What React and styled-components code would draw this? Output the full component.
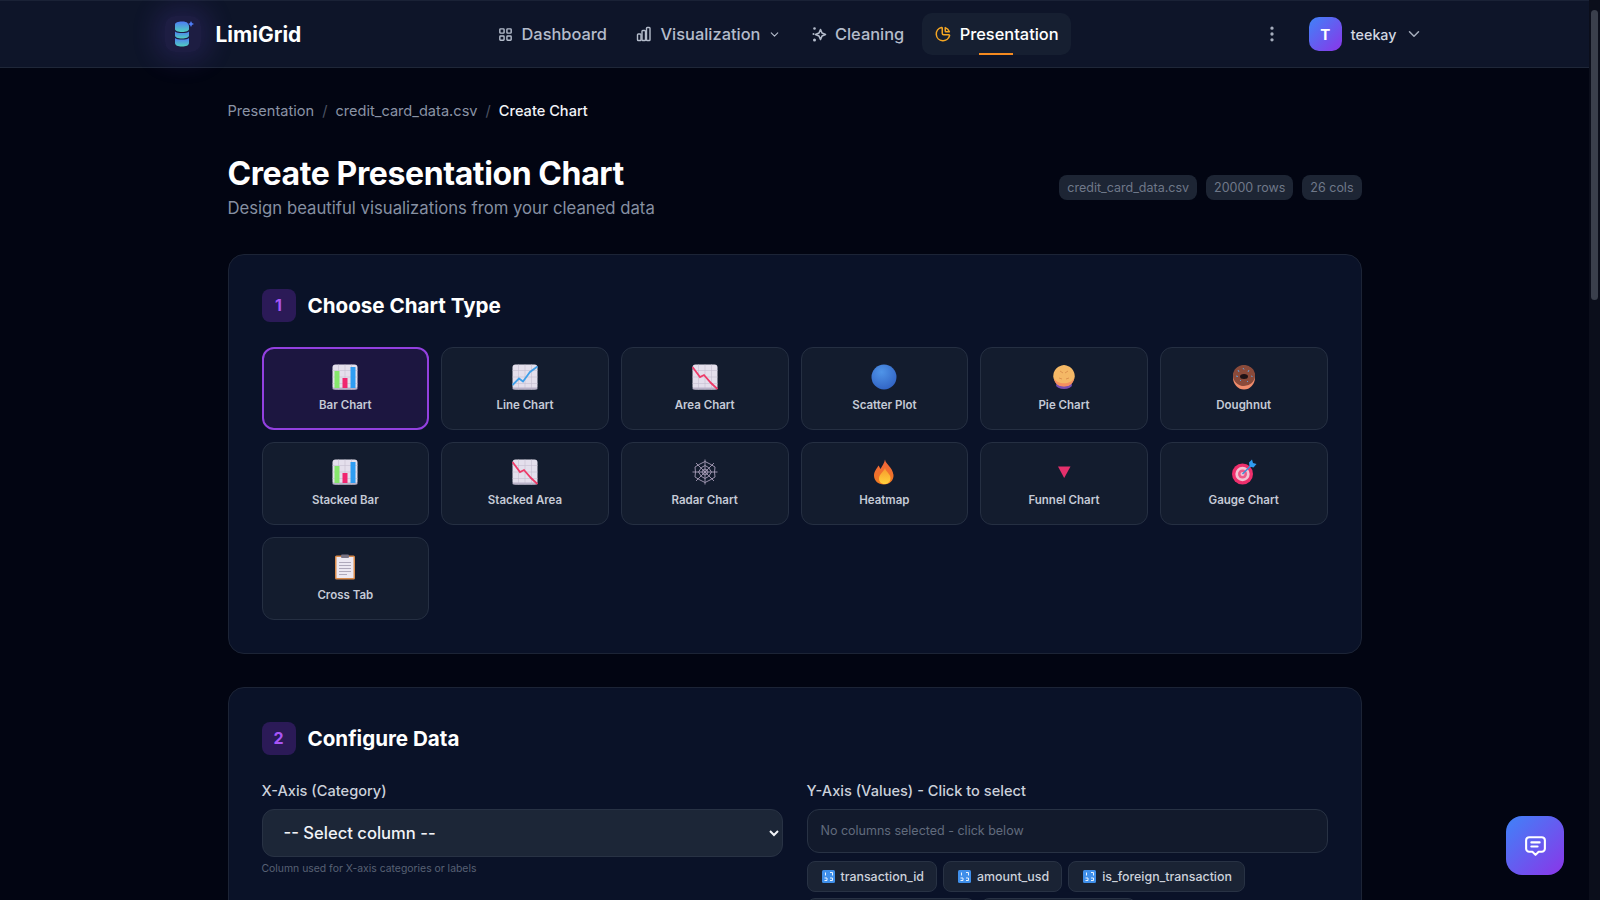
import React from 'react'
import styled, { createGlobalStyle } from 'styled-components'
import { TbLayoutGrid, TbChartPie, TbDotsVertical, TbChevronDown, TbMessage2 } from 'react-icons/tb'

const GlobalStyle = createGlobalStyle`
  html, body { margin: 0; padding: 0; background: #020512; }
  body { font-family: Inter, "Noto Sans", sans-serif; color: #fff; }
  * { box-sizing: border-box; }
`

// little emoji-like drawings
const GridTile = ({ children }) => (
  <svg width="26" height="26" viewBox="0 0 26 26">
    <rect x="0.5" y="0.5" width="25" height="25" rx="3" fill="#e4dfec" />
    <path d="M0.5 6.5H25.5M0.5 13H25.5M0.5 19.5H25.5M6.5 0.5V25.5M13 0.5V25.5M19.5 0.5V25.5" stroke="#c6c0d2" strokeWidth="0.6" />
    <rect x="0.5" y="23.5" width="25" height="2" rx="1" fill="#b9b2c8" />
    {children}
  </svg>
)

const BarEmoji = () => (
  <GridTile>
    <rect x="2.5" y="7" width="5" height="17" fill="#86e66c" />
    <rect x="10.5" y="14" width="5" height="10" fill="#f0266f" />
    <rect x="18.5" y="3" width="5" height="21" fill="#2f9df2" />
  </GridTile>
)

const LineEmoji = () => (
  <GridTile>
    <path d="M0.5 21L7 14.5L11 17.5L18 8L25.5 2.5" fill="none" stroke="#3f9fe8" strokeWidth="1.8" />
  </GridTile>
)

const AreaEmoji = () => (
  <GridTile>
    <path d="M0.5 3L8 13L12 11L19 19L25.5 25" fill="none" stroke="#ee3a68" strokeWidth="1.8" />
  </GridTile>
)

const BallEmoji = () => (
  <svg width="26" height="26" viewBox="0 0 26 26">
    <defs>
      <radialGradient id="ball" cx="0.4" cy="0.3" r="0.8">
        <stop offset="0" stopColor="#4f94e8" />
        <stop offset="1" stopColor="#2f5fc0" />
      </radialGradient>
    </defs>
    <circle cx="13" cy="13" r="12.5" fill="url(#ball)" />
  </svg>
)

const PieEmoji = () => (
  <svg width="26" height="26" viewBox="0 0 26 26">
    <ellipse cx="13" cy="21" rx="8" ry="4" fill="#7a4fb0" />
    <path d="M13 1C15 1 16 2 18 2.5C20.500 3.500 23 7 23.500 10C24.500 13 23 17 20 20C17 23 9 23 6 20C3 17 1.500 13 2.500 10C3 7 5.500 3.500 8 2.500C10 2 11 1 13 1Z" fill="#f4b866" />
    <path d="M3 14C6 21 20 21 23 14C23 18 20 22.500 13 22.500C6 22.500 3 18 3 14Z" fill="#f58f5e" />
    <path d="M9 7L12 9M17 7L14 9M8 14L11 15M18 14L15 15" stroke="#d98d4c" strokeWidth="0.9" />
  </svg>
)

const DonutEmoji = () => (
  <svg width="26" height="26" viewBox="0 0 26 26">
    <ellipse cx="13" cy="13.500" rx="11" ry="12" fill="#f08c6c" />
    <ellipse cx="13" cy="11.500" rx="11" ry="10.500" fill="#8a4a3a" />
    <ellipse cx="13" cy="12.500" rx="4" ry="2.500" fill="#1d1216" />
    <path d="M7 6l1 2M12 4l1 1.500M18 6l-1 2M5 12l2 .5M20 12l1.500 .5M9 17l1-1M16 18l1-1" stroke="#5ea6e8" strokeWidth="0.9" />
  </svg>
)

const WebEmoji = () => (
  <svg width="26" height="26" viewBox="0 0 26 26" fill="none" stroke="#a79db8" strokeWidth="0.9">
    <path d="M13 0.500V25.500M0.500 13H25.500M4 4L22 22M22 4L4 22" />
    <path d="M13 2.500L18 5L23 8L22.500 13L23 18L18 21L13 23.500L8 21L3 18L3.500 13L3 8L8 5Z" />
    <path d="M13 6.500L16.500 8.500L19.500 13L16.500 17.500L13 19.500L9.500 17.500L6.500 13L9.500 8.500Z" />
    <path d="M13 10L15 11L16 13L15 15L13 16L11 15L10 13L11 11Z" />
  </svg>
)

const FlameEmoji = () => (
  <svg width="26" height="26" viewBox="0 0 26 26">
    <defs>
      <linearGradient id="flame" x1="0" y1="0" x2="0" y2="1">
        <stop offset="0" stopColor="#f0643c" />
        <stop offset="1" stopColor="#f07a20" />
      </linearGradient>
      <linearGradient id="flameIn" x1="0" y1="0" x2="0" y2="1">
        <stop offset="0" stopColor="#f8982c" />
        <stop offset="1" stopColor="#ffd23c" />
      </linearGradient>
    </defs>
    <path d="M14 0.500C14.500 5 21.500 8 22.500 16C22.800 21.500 18.500 25.500 13 25.500C7 25.500 3 21.500 3 16.500C3 12 6 9.500 7.500 6.500C8.500 8 9 9 9.500 10C11 7 13.500 4 14 0.500Z" fill="url(#flame)" />
    <path d="M14 9C15 13 19.500 15 19.500 19C19.500 23 16.500 25 13.500 25C10 25 8 22.500 8 19.500C8 15.500 12.500 13 14 9Z" fill="url(#flameIn)" />
  </svg>
)

const FunnelEmoji = () => (
  <svg width="26" height="26" viewBox="0 0 26 26">
    <path d="M7 7.500H19.500L13.200 19Z" fill="#e5306c" />
  </svg>
)

const TargetEmoji = () => (
  <svg width="26" height="26" viewBox="0 0 26 26">
    <circle cx="11.500" cy="15" r="10.500" fill="#ee2f6c" />
    <circle cx="11.500" cy="15" r="7.200" fill="#f2c2d2" />
    <circle cx="11.500" cy="15" r="4.500" fill="#ee5a88" />
    <circle cx="11.500" cy="15" r="2" fill="#f2c2d2" />
    <path d="M11.500 15L21 5.500" stroke="#3f8fd8" strokeWidth="1.600" />
    <path d="M18 3.500L21 0.500L22 4L25.500 5L22.500 8.500L18.500 7.500Z" fill="#2f9df2" />
  </svg>
)

const ClipboardEmoji = () => (
  <svg width="26" height="26" viewBox="0 0 26 26">
    <rect x="3" y="1.500" width="20" height="24" rx="1.500" fill="#d98a4a" />
    <rect x="4.500" y="3" width="17" height="21" fill="#ece8f2" />
    <rect x="9" y="0.500" width="8" height="3.500" rx="1" fill="#7a7484" />
    <path d="M7 8.500H19M7 11.500H19M7 14.500H19M7 17.500H19M7 20.500H15" stroke="#a8a2b4" strokeWidth="0.9" />
  </svg>
)

const NumbersKey = () => (
  <svg width="13" height="13" viewBox="0 0 13 13">
    <rect width="13" height="13" rx="1.500" fill="#3f8fea" />
    <path d="M3.500 2.500V5.500M8 2.500H10.500V5.500M2.500 8H5V10.500H2.500M8 8H10.500V10.500H8" fill="none" stroke="#e9f2fd" strokeWidth="1" />
  </svg>
)

const LogoMark = () => (
  <svg width="22" height="28" viewBox="0 0 22 28">
    <defs>
      <linearGradient id="logoStack" x1="0" y1="0" x2="0" y2="1">
        <stop offset="0" stopColor="#4d7cf6" />
        <stop offset="0.5" stopColor="#4fa6d8" />
        <stop offset="1" stopColor="#4fd0c0" />
      </linearGradient>
    </defs>
    <path d="M3 4.500C3 2.500 6 1.500 10 1.500C13 1.500 14.500 2 15.500 3L17 5.500V9C17 11 14 12 10 12C6 12 3 11 3 9Z" fill="url(#logoStack)" />
    <path d="M3 11.500C5 13.500 15 13.500 17 11.500V15.500C17 17.500 14 18.500 10 18.500C6 18.500 3 17.500 3 15.500Z" fill="url(#logoStack)" />
    <path d="M3 18C5 20 15 20 17 18V23C17 25.500 14 26.500 10 26.500C6 26.500 3 25.500 3 23Z" fill="url(#logoStack)" />
    <path d="M19 1L20 3L22 4L20 5L19 7L18 5L16 4L18 3Z" fill="#4d7cf6" />
  </svg>
)

const VizIcon = () => (
  <svg width="16" height="16" viewBox="0 0 16 16" fill="none" stroke="currentColor" strokeWidth="1.400" strokeLinejoin="round">
    <rect x="1.500" y="8" width="3.500" height="6.500" rx="0.800" />
    <rect x="6" y="4.500" width="3.500" height="10" rx="0.800" />
    <rect x="10.500" y="1.500" width="3.500" height="13" rx="0.800" />
  </svg>
)

const CleanIcon = () => (
  <svg width="16" height="18" viewBox="0 0 16 18" fill="none" stroke="currentColor" strokeWidth="1.600" strokeLinejoin="round">
    <path d="M9.500 4.500L11 8L14.500 9.500L11 11L9.500 14.500L8 11L4.500 9.500L8 8Z" />
    <circle cx="3.500" cy="3.500" r="1.300" fill="currentColor" stroke="none" />
    <circle cx="2.500" cy="9" r="1" fill="currentColor" stroke="none" />
    <circle cx="3.500" cy="15" r="1.500" fill="currentColor" stroke="none" />
  </svg>
)

const chartTypes = [
  { label: 'Bar Chart', icon: BarEmoji, selected: true },
  { label: 'Line Chart', icon: LineEmoji },
  { label: 'Area Chart', icon: AreaEmoji },
  { label: 'Scatter Plot', icon: BallEmoji },
  { label: 'Pie Chart', icon: PieEmoji },
  { label: 'Doughnut', icon: DonutEmoji },
  { label: 'Stacked Bar', icon: BarEmoji },
  { label: 'Stacked Area', icon: AreaEmoji },
  { label: 'Radar Chart', icon: WebEmoji },
  { label: 'Heatmap', icon: FlameEmoji },
  { label: 'Funnel Chart', icon: FunnelEmoji },
  { label: 'Gauge Chart', icon: TargetEmoji },
  { label: 'Cross Tab', icon: ClipboardEmoji }
]

const columns = ['transaction_id', 'amount_usd', 'is_foreign_transaction']

const App = () => {
  return (
    <>
      <GlobalStyle />
      <Shell>
        <Page>
          <Nav>
            <NavInner>
              <Brand>
                <LogoGlow>
                  <LogoMark />
                </LogoGlow>
                <BrandName>LimiGrid</BrandName>
              </Brand>
              <NavLinks>
                <NavLink><TbLayoutGrid size={17} />Dashboard</NavLink>
                <NavLink><VizIcon />Visualization<TbChevronDown size={13} /></NavLink>
                <NavLink><CleanIcon />Cleaning</NavLink>
                <NavLink $active>
                  <ActiveIcon><TbChartPie size={18} /></ActiveIcon>
                  Presentation
                  <Underline />
                </NavLink>
              </NavLinks>
              <UserArea>
                <MoreIcon><TbDotsVertical size={20} /></MoreIcon>
                <Avatar>T</Avatar>
                <UserName>teekay</UserName>
                <UserChevron><TbChevronDown size={18} /></UserChevron>
              </UserArea>
            </NavInner>
          </Nav>
          <Main>
            <Breadcrumbs>
              <span>Presentation</span>
              <Slash>/</Slash>
              <span>credit_card_data.csv</span>
              <Slash>/</Slash>
              <Current>Create Chart</Current>
            </Breadcrumbs>
            <PageHead>
              <div>
                <Title>Create Presentation Chart</Title>
                <Subtitle>Design beautiful visualizations from your cleaned data</Subtitle>
              </div>
              <Badges>
                <Badge>credit_card_data.csv</Badge>
                <Badge>20000 rows</Badge>
                <Badge>26 cols</Badge>
              </Badges>
            </PageHead>
            <Card>
              <CardHead>
                <StepNumber>1</StepNumber>
                <CardTitle>Choose Chart Type</CardTitle>
              </CardHead>
              <ChartGrid>
                {chartTypes.map(({ label, icon: Icon, selected }) => (
                  <ChartTile key={label} $selected={selected}>
                    <Icon />
                    <TileLabel>{label}</TileLabel>
                  </ChartTile>
                ))}
              </ChartGrid>
            </Card>
            <ConfigCard>
              <CardHead>
                <StepNumber>2</StepNumber>
                <CardTitle>Configure Data</CardTitle>
              </CardHead>
              <FormGrid>
                <div>
                  <FieldLabel>X-Axis (Category)</FieldLabel>
                  <ColumnSelect defaultValue="">
                    <option value="">-- Select column --</option>
                  </ColumnSelect>
                  <Hint>Column used for X-axis categories or labels</Hint>
                </div>
                <div>
                  <FieldLabel>Y-Axis (Values) - Click to select</FieldLabel>
                  <SelectedBox>No columns selected - click below</SelectedBox>
                  <ColumnChips>
                    {columns.map(name => (
                      <ColumnChip key={name}>
                        <NumbersKey />
                        {name}
                      </ColumnChip>
                    ))}
                    <BlankChip $width={168} />
                    <BlankChip $width={155} />
                  </ColumnChips>
                </div>
              </FormGrid>
            </ConfigCard>
          </Main>
        </Page>
        <ScrollTrack>
          <ScrollThumb />
        </ScrollTrack>
      </Shell>
      <ChatButton><TbMessage2 size={25} /></ChatButton>
    </>
  )
}

const Shell = styled.div`
  display: flex;
  height: 100vh;
  overflow: hidden;
`

const Page = styled.div`
  flex: 1;
  min-width: 0;
  overflow: hidden;
`

const ScrollTrack = styled.div`
  flex: none;
  width: 11px;
  background: #0b0e1b;
  padding: 10px 2px 0;
`

const ScrollThumb = styled.div`
  height: 290px;
  border-radius: 4px;
  background: #3a3f4c;
`

const Nav = styled.header`
  height: 68px;
  background: #0e1529;
  border-bottom: 1px solid #1f2738;
  border-top: 1px solid #1a2236;
`

const NavInner = styled.div`
  width: 1260px;
  height: 100%;
  margin: 0 auto;
  padding-right: 2px;
  display: flex;
  align-items: center;
`

const Brand = styled.div`
  display: flex;
  align-items: center;
  gap: 15px;
  width: 320px;
`

const LogoGlow = styled.div`
  width: 36px;
  height: 36px;
  display: flex;
  align-items: center;
  justify-content: center;
  border-radius: 10px;
  background: rgba(139, 92, 246, 0.12);
  box-shadow: 0 0 24px 10px rgba(109, 72, 216, 0.16);
`

const BrandName = styled.div`
  font-size: 21px;
  font-weight: 700;
`

const NavLinks = styled.nav`
  display: flex;
  align-items: center;
  gap: 5.5px;
`

const NavLink = styled.a`
  position: relative;
  display: flex;
  align-items: center;
  gap: 8px;
  height: 42px;
  padding: 0 12px;
  border-radius: 10px;
  font-size: 16.4px;
  font-weight: 500;
  color: ${p => (p.$active ? '#ffffff' : '#b4bccb')};
  background: ${p => (p.$active ? '#161f31' : 'transparent')};
  svg { flex: none; }
`

const ActiveIcon = styled.span`
  display: flex;
  color: #f5a623;
`

const Underline = styled.span`
  position: absolute;
  left: 57px;
  bottom: 0;
  width: 34px;
  height: 2px;
  background: #f58a1f;
`

const UserArea = styled.div`
  margin-left: auto;
  display: flex;
  align-items: center;
`

const MoreIcon = styled.span`
  display: flex;
  color: #a5adbc;
  margin-right: 27px;
`

const Avatar = styled.div`
  width: 33px;
  height: 34px;
  border-radius: 10px;
  background: linear-gradient(135deg, #3f83f8, #8b35e8);
  display: flex;
  align-items: center;
  justify-content: center;
  font-size: 15px;
  font-weight: 700;
`

const UserName = styled.span`
  margin-left: 9px;
  font-size: 14.3px;
  font-weight: 500;
  color: #d3d8e2;
`

const UserChevron = styled.span`
  display: flex;
  margin-left: 8px;
  color: #a5adbc;
`

const Main = styled.main`
  width: 1134px;
  margin: 0 auto;
  padding-top: 33px;
  padding-bottom: 40px;
`

const Breadcrumbs = styled.div`
  display: flex;
  align-items: center;
  gap: 8px;
  height: 20px;
  font-size: 14.6px;
  color: #8a93a5;
`

const Slash = styled.span`
  color: #4b5363;
`

const Current = styled.span`
  color: #f1f3f7;
  font-weight: 500;
`

const PageHead = styled.div`
  display: flex;
  align-items: flex-end;
  justify-content: space-between;
  margin-top: 33px;
  margin-bottom: 31px;
`

const Title = styled.h1`
  margin: 0;
  font-size: 32px;
  line-height: 40px;
  font-weight: 700;
  letter-spacing: -0.4px;
`

const Subtitle = styled.p`
  margin: 1px 0 0;
  font-size: 16.7px;
  line-height: 27.5px;
  color: #8690a2;
`

const Badges = styled.div`
  display: flex;
  gap: 9px;
  margin-bottom: 23px;
`

const Badge = styled.span`
  height: 25px;
  line-height: 25px;
  padding: 0 8px;
  border-radius: 8px;
  background: #1d2534;
  font-size: 12.5px;
  color: #6f7889;
`

const Card = styled.section`
  background: #0a1228;
  border: 1px solid #1c2436;
  border-radius: 16px;
  padding: 34px 33px 33px;
  height: 400px;
`

const ConfigCard = styled(Card)`
  height: 1700px;
  margin-top: 33px;
`

const CardHead = styled.div`
  display: flex;
  align-items: center;
  gap: 12px;
  margin-bottom: 25px;
`

const StepNumber = styled.div`
  width: 34px;
  height: 33px;
  border-radius: 8px;
  background: #2b1a57;
  color: #a855f7;
  display: flex;
  align-items: center;
  justify-content: center;
  font-size: 16px;
  font-weight: 700;
`

const CardTitle = styled.h2`
  margin: 0;
  font-size: 20.6px;
  font-weight: 700;
`

const ChartGrid = styled.div`
  display: grid;
  grid-template-columns: repeat(6, 1fr);
  grid-auto-rows: 83px;
  gap: 12px;
`

const ChartTile = styled.div`
  display: flex;
  flex-direction: column;
  align-items: center;
  padding-top: ${p => (p.$selected ? '15px' : '16px')};
  border-radius: 12px;
  background: ${p => (p.$selected ? '#1c1640' : '#131c2e')};
  border: ${p => (p.$selected ? '2px solid #9340e0' : '1px solid #252f42')};
`

const TileLabel = styled.span`
  margin-top: 7px;
  font-size: 11.5px;
  line-height: 16px;
  font-weight: 600;
  color: #c5cad6;
`

const FormGrid = styled.div`
  display: grid;
  grid-template-columns: 1fr 1fr;
  gap: 24px;
  margin-top: 26px;
`

const FieldLabel = styled.div`
  font-size: 14.6px;
  line-height: 20px;
  font-weight: 500;
  color: #ccd1db;
  margin-bottom: 8px;
`

const ColumnSelect = styled.select`
  display: block;
  width: 100%;
  height: 48px;
  padding: 0 17px;
  border: 1px solid #283244;
  border-radius: 12px;
  background: #1c2637;
  color: #f1f3f7;
  font-family: inherit;
  font-size: 16.6px;
  font-weight: 500;
`

const Hint = styled.div`
  margin-top: 5px;
  font-size: 10.4px;
  line-height: 14px;
  color: #586174;
`

const SelectedBox = styled.div`
  height: 44px;
  padding: 0 13px;
  display: flex;
  align-items: center;
  border: 1px solid #283244;
  border-radius: 12px;
  background: #121a2c;
  font-size: 12.5px;
  color: #616b7d;
`

const ColumnChips = styled.div`
  display: flex;
  flex-wrap: wrap;
  gap: 6px;
  margin-top: 8px;
`

const ColumnChip = styled.span`
  display: flex;
  align-items: center;
  gap: 6px;
  height: 31px;
  padding: 0 12px 0 14px;
  border: 1px solid #283244;
  border-radius: 8px;
  background: #1a2334;
  font-size: 12.4px;
  font-weight: 500;
  color: #ccd1db;
`

const BlankChip = styled(ColumnChip)`
  width: ${p => p.$width}px;
`

const ChatButton = styled.button`
  position: fixed;
  left: 1506px;
  top: 816px;
  width: 58px;
  height: 59px;
  border: none;
  border-radius: 16px;
  background: linear-gradient(135deg, #3f83f8, #8b35e8);
  color: #fff;
  display: flex;
  align-items: center;
  justify-content: center;
`

export default App
